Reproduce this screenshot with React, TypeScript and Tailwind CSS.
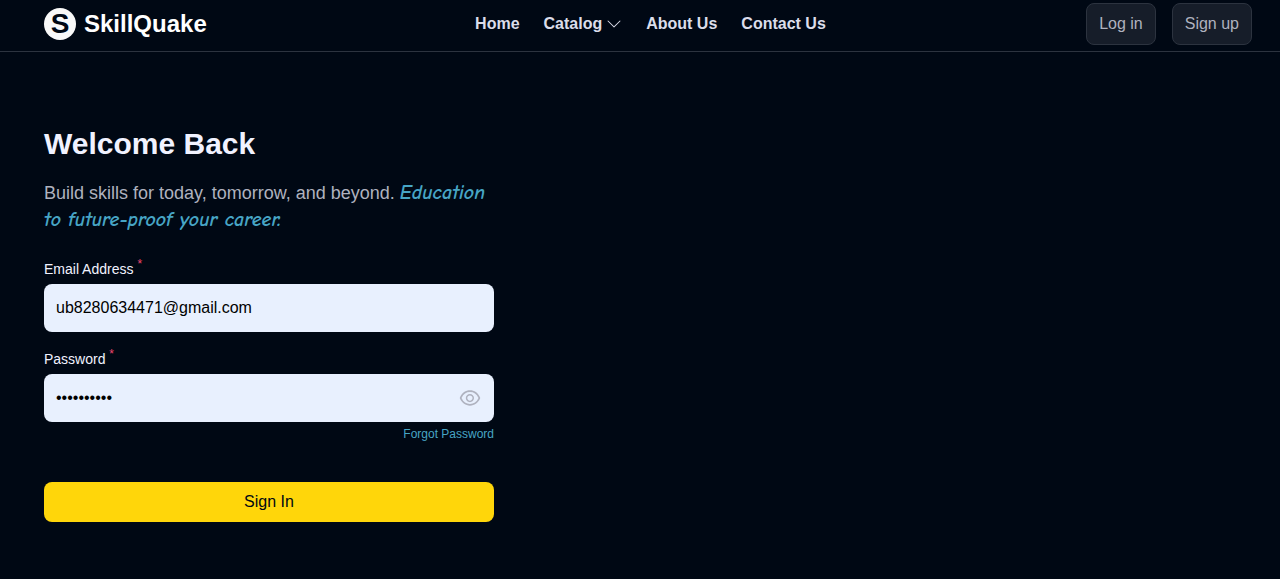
import { useState } from "react";
import { AiOutlineEye, AiOutlineEyeInvisible } from "react-icons/ai";
import { BsChevronDown } from "react-icons/bs";

const inputClass =
  "h-12 w-full rounded-lg bg-[#e8f0fe] px-3 text-base text-black outline-none";

function Header() {
  return (
    <header className="border-b border-[#2c333f]">
      <div className="flex items-center justify-between pt-[3px] pr-7 pb-[6px] pl-11">
        <a href="#" className="flex items-center gap-2 pr-2">
          <span className="flex size-8 items-center justify-center rounded-full bg-[#f9f9f9] text-[28px] leading-8 font-bold text-[#000814]">
            S
          </span>
          <span className="text-2xl font-bold text-white">SkillQuake</span>
        </a>
        <nav className="flex items-center gap-6 text-base font-bold text-[#dbddea]">
          <a href="#">Home</a>
          <button type="button" className="flex items-center gap-1 font-bold">
            Catalog
            <BsChevronDown aria-hidden="true" />
          </button>
          <a href="#">About Us</a>
          <a href="#">Contact Us</a>
        </nav>
        <div className="flex items-center gap-4 text-base text-[#afb2bf]">
          <button type="button" className="rounded-lg border border-[#2c333f] bg-[#161d29] px-3 py-2">
            Log in
          </button>
          <button type="button" className="rounded-lg border border-[#2c333f] bg-[#161d29] px-3 py-2">
            Sign up
          </button>
        </div>
      </div>
    </header>
  );
}

function FieldLabel({ htmlFor, text }: { htmlFor: string; text: string }) {
  return (
    <label htmlFor={htmlFor} className="mb-1 block text-sm leading-[22px] text-[#f1f2ff]">
      {text} <sup className="text-xs text-[#ef476f]">*</sup>
    </label>
  );
}

function LoginForm() {
  const [visible, setVisible] = useState(false);
  return (
    <form className="mt-6" onSubmit={(e) => e.preventDefault()}>
      <FieldLabel htmlFor="email" text="Email Address" />
      <input id="email" type="email" defaultValue="ub8280634471@gmail.com" className={inputClass} />
      <div className="mt-4">
        <FieldLabel htmlFor="password" text="Password" />
        <div className="relative">
          <input
            id="password"
            type={visible ? "text" : "password"}
            defaultValue="skillquake"
            className={inputClass}
          />
          <button
            type="button"
            aria-label="Toggle password visibility"
            onClick={() => setVisible(!visible)}
            className="absolute inset-y-0 right-3 text-2xl text-[#afb2bf]"
          >
            {visible ? <AiOutlineEyeInvisible /> : <AiOutlineEye />}
          </button>
        </div>
      </div>
      <div className="mt-1 flex justify-end">
        <a href="#" className="text-xs text-[#47a5c5]">
          Forgot Password
        </a>
      </div>
      <button type="submit" className="mt-10 w-full rounded-lg bg-[#ffd60a] py-2 text-base text-[#000814]">
        Sign In
      </button>
    </form>
  );
}

export default function App() {
  return (
    <div className="min-h-screen bg-[#000814] font-['Liberation_Sans',Arial,sans-serif]">
      <Header />
      <main className="px-11 pt-[73px] pb-14">
        <div className="max-w-[450px]">
          <h1 className="text-3xl leading-[38px] font-bold text-[#f1f2ff]">Welcome Back</h1>
          <p className="mt-[17px] text-lg leading-[27px] text-[#afb2bf]">
            Build skills for today, tomorrow, and beyond.{" "}
            <span className="font-['Comic_Neue','Comic_Sans_MS','Open_Sans',cursive] text-[20px] leading-none font-bold text-[#47a5c5] italic">
              Education to future-proof your career.
            </span>
          </p>
          <LoginForm />
        </div>
      </main>
    </div>
  );
}
